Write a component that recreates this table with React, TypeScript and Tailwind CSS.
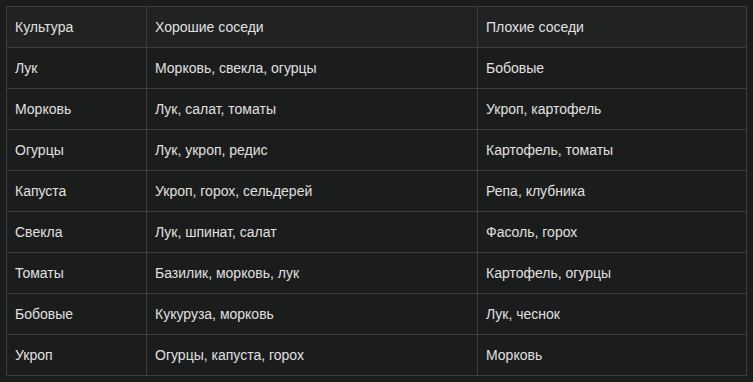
import React from "react";

const rows: [string, string, string][] = [
  ["Лук", "Морковь, свекла, огурцы", "Бобовые"],
  ["Морковь", "Лук, салат, томаты", "Укроп, картофель"],
  ["Огурцы", "Лук, укроп, редис", "Картофель, томаты"],
  ["Капуста", "Укроп, горох, сельдерей", "Репа, клубника"],
  ["Свекла", "Лук, шпинат, салат", "Фасоль, горох"],
  ["Томаты", "Базилик, морковь, лук", "Картофель, огурцы"],
  ["Бобовые", "Кукуруза, морковь", "Лук, чеснок"],
  ["Укроп", "Огурцы, капуста, горох", "Морковь"],
];

export default function App() {
  return (
    <div
      className="w-[753px] h-[382px] bg-[#1b1c1c] p-[6px] text-[#e0e0e0] text-[14px]"
      style={{ fontFamily: '"Liberation Sans", Arial, sans-serif' }}
    >
      <table className="border-collapse w-[740px] table-fixed">
        <colgroup>
          <col className="w-[140px]" />
          <col className="w-[331px]" />
          <col className="w-[269px]" />
        </colgroup>
        <thead>
          <tr className="h-[41px] bg-[#212222]">
            <th className="border border-[#3d3d3d] px-2 text-left font-normal">Культура</th>
            <th className="border border-[#3d3d3d] px-2 text-left font-normal">Хорошие соседи</th>
            <th className="border border-[#3d3d3d] px-2 text-left font-normal">Плохие соседи</th>
          </tr>
        </thead>
        <tbody>
          {rows.map((r) => (
            <tr key={r[0]} className="h-[41px]">
              {r.map((c, i) => (
                <td key={i} className="border border-[#3d3d3d] px-2">
                  {c}
                </td>
              ))}
            </tr>
          ))}
        </tbody>
      </table>
    </div>
  );
}
